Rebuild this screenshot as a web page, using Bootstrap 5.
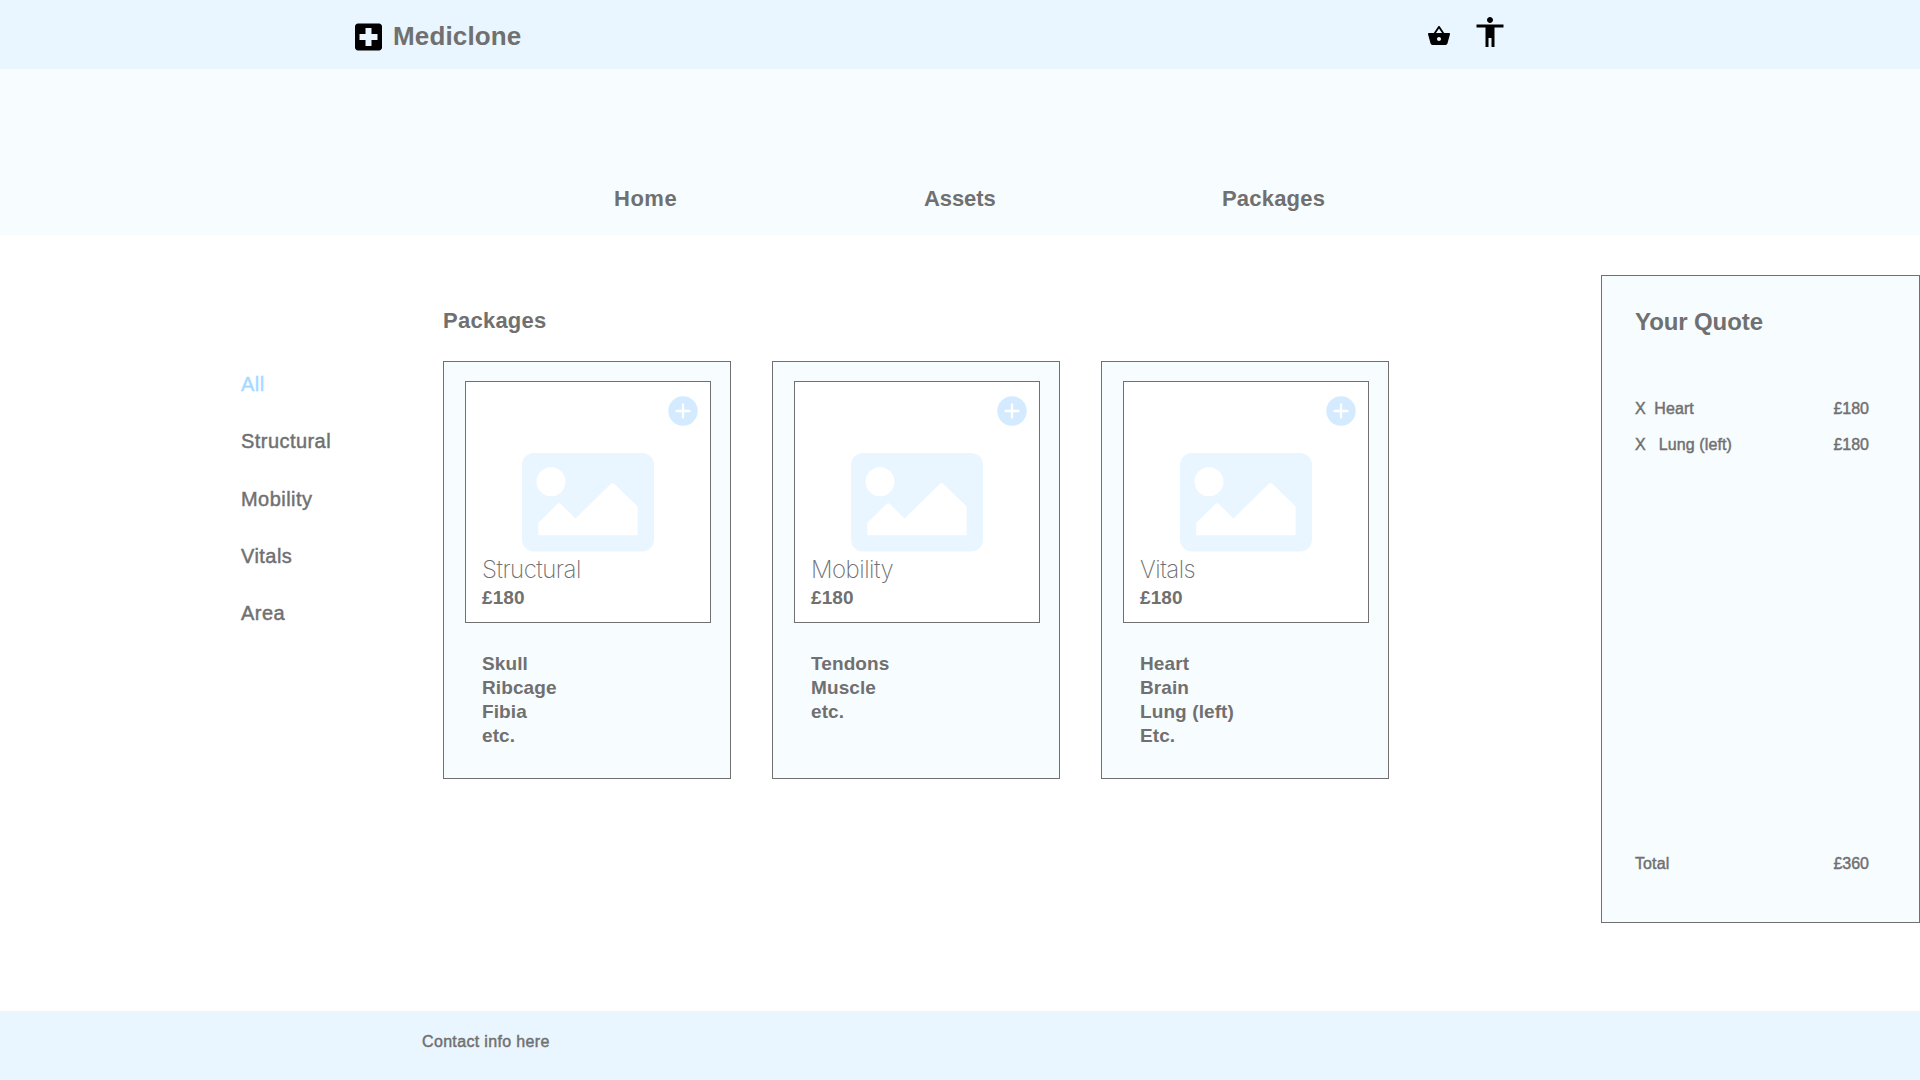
<!DOCTYPE html>
<html lang="en">
<head>
<meta charset="utf-8">
<meta name="viewport" content="width=device-width, initial-scale=1">
<title>Mediclone – Packages</title>
<link rel="stylesheet" href="https://cdn.jsdelivr.net/npm/bootstrap@5.3.0/dist/css/bootstrap.min.css">
<style>
  body { font-family: "Liberation Sans", Arial, sans-serif; color: #707070; min-height: 1080px; }
  a { color: inherit; text-decoration: none; }
  .medium-text { -webkit-text-stroke: .45px currentColor; }
  .top-bar { height: 69px; background: #e9f6ff; padding: 0 412px 0 350px; }
  .brand { padding-top: 18.500px; gap: 6px; font-size: 26px; line-height: 30px; letter-spacing: .15px; }
  .brand span { padding-top: 2.500px; }
  .tools { padding-top: 14px; gap: 21px; color: #000; }
  .tools .basket { margin-top: 10px; }
  .menu-bar { height: 166px; background: #f7fcff; padding: 115px 0 0 614px; font-size: 22px; line-height: 30px; }
  .menu-bar a { letter-spacing: .2px; }
  .menu-bar .col-home { width: 310px; }
  .menu-bar .col-home a { letter-spacing: .5px; }
  .menu-bar .col-assets { width: 298px; }
  .menu-bar .col-assets a { letter-spacing: -.1px; }
  .page-body { height: 776px; }
  .filters { width: 443px; padding: 121px 0 0 241px; font-size: 20px; line-height: 57.3px; letter-spacing: .45px; }
  .filters .active { color: #a6daff; }
  .catalogue { padding-top: 71px; }
  .catalogue h1 { font-size: 22px; line-height: 30px; margin-bottom: 25px; letter-spacing: .25px; }
  .packs { gap: 41px; }
  .pack { width: 288px; height: 418px; border: 1px solid #707070; background: #f7fcff; padding: 19px 19px 0 21px; font-size: 19px; line-height: 24px; letter-spacing: .1px; }
  .pack-media { height: 242px; border: 1px solid #707070; background: #fff; padding: 71px 0 0 16px; }
  .pack-media .art { display: block; margin-left: 40px; }
  .pack-media .add { top: 13.500px; right: 12.500px; }
  .pack-media h2 { font-family: Inter, "Liberation Sans", sans-serif; font-weight: 200; font-size: 24px; line-height: 28px; margin: 4px 0 2px; letter-spacing: -.5px; }
  .pack ul { margin: 29px 0 0 17px; }
  .quote { width: 319px; height: 648px; margin-top: 40px; border: 1px solid #707070; background: #f7fcff; padding: 31px 50px 40px 33px; font-size: 16px; line-height: 36px; }
  .quote h2 { font-size: 24px; line-height: 30px; letter-spacing: -.1px; margin-bottom: 54px; -webkit-text-stroke: 0; }
  .quote .item-name { letter-spacing: .1px; }
  .quote .gap-heart { margin-right: 8.500px; }
  .quote .gap-lung { margin-right: 13px; }
  .foot { height: 69px; background: #e9f6ff; padding: 19px 0 0 422px; font-size: 16px; line-height: 24px; letter-spacing: .34px; }
</style>
<script src="https://cdn.jsdelivr.net/npm/bootstrap@5.3.0/dist/js/bootstrap.bundle.min.js"></script>
</head>
<body class="d-flex flex-column bg-white">
<svg class="d-none" xmlns="http://www.w3.org/2000/svg">
  <symbol id="picture" viewBox="0 0 132 99">
    <rect width="132" height="98.6" rx="12" fill="#e9f6ff"/>
    <circle cx="29" cy="28.7" r="14.5" fill="#fff"/>
    <path fill="#fff" d="M16.3 82.2V69.8L35.2 51.3Q37.2 49.4 39.2 51.3L53.5 65.4 88.6 30.9Q90.6 29 92.6 30.9L115.7 53.5V82.2Z"/>
  </symbol>
  <symbol id="plus" viewBox="0 0 30 30">
    <circle cx="15" cy="15" r="14.7" fill="#d4ebff"/>
    <path d="M15 8.5v13M8.500 15h13" stroke="#fff" stroke-width="2.3" stroke-linecap="round"/>
  </symbol>
</svg>

<header class="top-bar d-flex justify-content-between align-items-start">
  <a href="#" class="brand d-flex fw-bold">
    <svg width="37" height="36" viewBox="0 0 24 24" style="color:#000" fill="currentColor"><path d="M19 3H5c-1.100 0-1.990.9-1.990 2L3 19c0 1.100.9 2 2 2h14c1.100 0 2-.9 2-2V5c0-1.100-.9-2-2-2zm-1 11h-4v4h-4v-4H6v-4h4V6h4v4h4v4z"/></svg>
    <span>Mediclone</span>
  </a>
  <div class="tools d-flex align-items-start">
    <svg class="basket" width="24" height="24" viewBox="0 0 24 24" fill="currentColor"><path d="M17.210 9l-4.380-6.560c-.19-.28-.51-.42-.83-.42-.32 0-.64.14-.83.43L6.790 9H2c-.55 0-1 .45-1 1 0 .09.01.18.04.27l2.540 9.270c.23.84 1 1.460 1.920 1.460h13c.92 0 1.690-.62 1.930-1.460l2.540-9.270L23 10c0-.55-.45-1-1-1h-4.790zM9 9l3-4.400L15 9H9zm3 8c-1.100 0-2-.9-2-2s.9-2 2-2 2 .9 2 2-.9 2-2 2z"/></svg>
    <svg width="36" height="36" viewBox="0 0 24 24" fill="currentColor"><path d="M12 2c1.100 0 2 .9 2 2s-.9 2-2 2-2-.9-2-2 .9-2 2-2zm9 7h-6v13h-2v-6h-2v6H9V9H3V7h18v2z"/></svg>
  </div>
</header>

<nav class="menu-bar d-flex fw-bold">
  <div class="col-home"><a href="#">Home</a></div>
  <div class="col-assets"><a href="#">Assets</a></div>
  <div><a href="#">Packages</a></div>
</nav>

<main class="page-body d-flex align-items-start">
  <aside class="filters medium-text d-flex flex-column">
    <a href="#" class="active">All</a>
    <a href="#">Structural</a>
    <a href="#">Mobility</a>
    <a href="#">Vitals</a>
    <a href="#">Area</a>
  </aside>

  <section class="catalogue">
    <h1 class="fw-bold">Packages</h1>
    <div class="packs d-flex">
      <article class="pack fw-bold">
        <div class="pack-media position-relative">
          <svg class="add position-absolute" width="30" height="30"><use href="#plus"/></svg>
          <svg class="art" width="132" height="99"><use href="#picture"/></svg>
          <h2>Structural</h2>
          <div>£180</div>
        </div>
        <ul class="list-unstyled"><li>Skull</li><li>Ribcage</li><li>Fibia</li><li>etc.</li></ul>
      </article>
      <article class="pack fw-bold">
        <div class="pack-media position-relative">
          <svg class="add position-absolute" width="30" height="30"><use href="#plus"/></svg>
          <svg class="art" width="132" height="99"><use href="#picture"/></svg>
          <h2>Mobility</h2>
          <div>£180</div>
        </div>
        <ul class="list-unstyled"><li>Tendons</li><li>Muscle</li><li>etc.</li></ul>
      </article>
      <article class="pack fw-bold">
        <div class="pack-media position-relative">
          <svg class="add position-absolute" width="30" height="30"><use href="#plus"/></svg>
          <svg class="art" width="132" height="99"><use href="#picture"/></svg>
          <h2>Vitals</h2>
          <div>£180</div>
        </div>
        <ul class="list-unstyled"><li>Heart</li><li>Brain</li><li>Lung (left)</li><li>Etc.</li></ul>
      </article>
    </div>
  </section>

  <aside class="quote medium-text ms-auto d-flex flex-column">
    <h2 class="fw-bold">Your Quote</h2>
    <div class="d-flex justify-content-between"><div class="item-name"><span class="gap-heart">X</span>Heart</div><div>£180</div></div>
    <div class="d-flex justify-content-between"><div class="item-name"><span class="gap-lung">X</span>Lung (left)</div><div>£180</div></div>
    <div class="d-flex justify-content-between mt-auto"><div class="item-name">Total</div><div>£360</div></div>
  </aside>
</main>

<footer class="foot medium-text">Contact info here</footer>
</body>
</html>
